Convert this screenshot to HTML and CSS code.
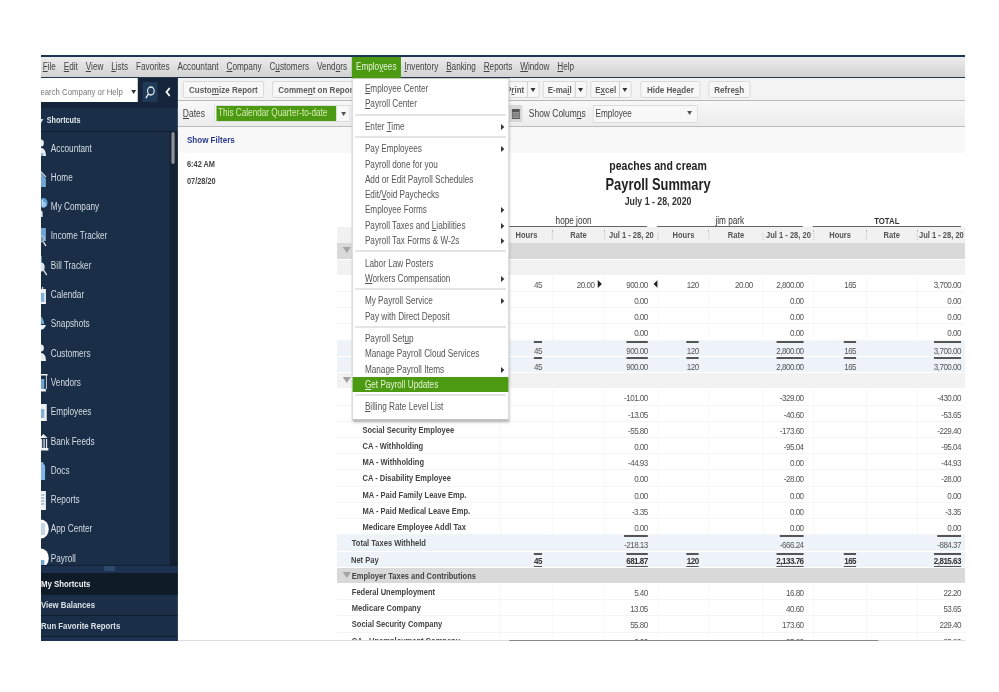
FILE: index.html
```html
<!DOCTYPE html>
<html lang="en">
<head>
    <meta charset="UTF-8">
    <meta name="viewport" content="width=device-width, initial-scale=1.0">
    <title>Payroll Summary</title>
    <link rel="stylesheet" href="styles.css">
</head>
<body>
    <div class="stage">
    <div class="window">
        <nav class="menubar">
            <a><u>F</u>ile</a><a><u>E</u>dit</a><a><u>V</u>iew</a><a><u>L</u>ists</a><a>Favorites</a><a>Accountant</a><a><u>C</u>ompany</a><a>C<u>u</u>stomers</a><a>Vend<u>o</u>rs</a><a class="active">Emplo<u>y</u>ees</a><a><u>I</u>nventory</a><a><u>B</u>anking</a><a><u>R</u>eports</a><a><u>W</u>indow</a><a><u>H</u>elp</a>
        </nav>

        <div class="workspace">
            <aside class="sidebar">
                <div class="search">
                    <div class="search-box"><span class="search-text">Search Company or Help</span><span class="arrow"></span></div>
                    <div class="search-btn">
                        <svg width="14" height="14" viewBox="0 0 14 14"><circle cx="8" cy="6" r="4" fill="none" stroke="#e8eef3" stroke-width="1.4"/><path d="M5 9 2 13" stroke="#e8eef3" stroke-width="1.6"/></svg>
                    </div>
                    <div class="collapse">
                        <svg width="8" height="10" viewBox="0 0 8 10"><path d="M6 1 2 5l4 4" fill="none" stroke="#f2f5f7" stroke-width="2"/></svg>
                    </div>
                </div>
                <div class="side-head"><span class="side-tri"></span>Shortcuts</div>
                <div class="side-list">
                    <div class="side-items">
                        <div class="side-item"><svg viewBox="0 0 12 24"><circle cx="0" cy="7" r="3.500" fill="#e9edf0"/><path d="M-4 20c0-6 1-8 4-8s6 2 6 8z" fill="#e9edf0"/><path d="M-4 20h7v-3h-7z" fill="#8fb6d8"/></svg>Accountant</div>
                        <div class="side-item"><svg viewBox="0 0 12 24"><path d="M-2 5 6 12" stroke="#e9edf0" stroke-width="1.200"/><path d="M-4 12 1 8l5 6v8H-4z" fill="#6fa5d4"/></svg>Home</div>
                        <div class="side-item"><svg viewBox="0 0 12 24"><circle cx="3" cy="8" r="5" fill="#5f9fd8"/><path d="M2 5v6h3V8H2" fill="none" stroke="#fff" stroke-width=".8"/><path d="M-4 22v-6l3-2 3 3v5z" fill="#dfe6ec"/></svg>My Company</div>
                        <div class="side-item"><svg viewBox="0 0 12 24"><path d="M-2 4h8v13h-8z" fill="#6fa5d4"/><circle cx="1" cy="15" r="3" fill="#6f93b5" stroke="#dfe6ec" stroke-width=".8"/><path d="M3 18 6 22" stroke="#dfe6ec" stroke-width="1.500"/></svg>Income Tracker</div>
                        <div class="side-item"><svg viewBox="0 0 12 24"><path d="M-2 3h3v8h-3z" fill="#5f9fd8"/><circle cx="0" cy="14" r="4.500" fill="#dfe6ec"/><path d="M3 17 7 22" stroke="#dfe6ec" stroke-width="1.500"/></svg>Bill Tracker</div>
                        <div class="side-item"><svg viewBox="0 0 12 24"><path d="M-2 6h8v15h-8z" fill="#eef1f4"/><path d="M-2 10h6v9h-6z" fill="#7fb0da"/><path d="M2 4v4" stroke="#eef1f4" stroke-width="1.400"/></svg>Calendar</div>
                        <div class="side-item"><svg viewBox="0 0 12 24"><path d="M-2 4c3 0 5 3 6 8H-2z" fill="#6fa5d4"/><path d="M-2 13h8c-1 3-4 5-8 5z" fill="#eef1f4"/></svg>Snapshots</div>
                        <div class="side-item"><svg viewBox="0 0 12 24"><circle cx="0" cy="7" r="3.500" fill="#e9edf0"/><path d="M-4 20c0-6 1-8 4-8s6 2 6 8z" fill="#e9edf0"/></svg>Customers</div>
                        <div class="side-item"><svg viewBox="0 0 12 24"><path d="M-2 4h10v1.500h-10zM-2 19h8v2.500h-8z" fill="#eef1f4"/><path d="M6 5h1v14H6z" fill="#eef1f4"/><path d="M-2 9h6v10h-6z" fill="#6fa5d4"/></svg>Vendors</div>
                        <div class="side-item"><svg viewBox="0 0 12 24"><path d="M-2 4h9v17h-9z" fill="#eef1f4"/><path d="M-2 9h6v9h-6z" fill="#7fb0da"/></svg>Employees</div>
                        <div class="side-item"><svg viewBox="0 0 12 24"><path d="M-2 9 3 5l5 4zM-2 19h11v2.500H-2z" fill="#eef1f4"/><path d="M0 10h1.500v9H0zM3 10h1.500v9H3zM6 10h1.500v9H6z" fill="#dfe6ec"/></svg>Bank Feeds</div>
                        <div class="side-item"><svg viewBox="0 0 12 24"><path d="M-2 4h4l3 4v14h-7z" fill="#7fb6e6"/></svg>Docs</div>
                        <div class="side-item"><svg viewBox="0 0 12 24"><path d="M-2 3h8v19h-8z" fill="#eef1f4"/><path d="M-2 7h6M-2 10h6M-2 13h6M-2 16h6" stroke="#6f8fae"/></svg>Reports</div>
                        <div class="side-item"><svg viewBox="0 0 12 24"><circle cx="0" cy="12" r="9.500" fill="#fff"/><path d="M-2 6h7v12h-7z" fill="#c3d6e8"/></svg>App Center</div>
                        <div class="side-item"><svg viewBox="0 0 12 24"><circle cx="0" cy="12" r="9.500" fill="#fff"/><path d="M-2 14h6v6h-6z" fill="#6fa5d4"/></svg>Payroll</div>
                    </div>
                    <div class="side-rail"><div class="side-thumb"></div></div>
                </div>
                <div class="splitter"><span></span></div>
                <div class="side-tab current">My Shortcuts</div>
                <div class="side-tab">View Balances</div>
                <div class="side-tab">Run Favorite Reports</div>
                <div class="side-foot"></div>
            </aside>

            <main class="main">
                <div class="toolbar">
                    <span class="btn">Custo<u>m</u>ize Report</span>
                    <span class="btn">Comme<u>n</u>t on Report</span>
                    <span class="btn hidden-btn"></span>
                    <span class="btn hidden-btn"></span>
                    <div class="splits">
                        <span class="btn split">P<u>r</u>int<i class="arr"></i></span>
                        <span class="btn split">E-ma<u>i</u>l<i class="arr"></i></span>
                        <span class="btn split">E<u>x</u>cel<i class="arr"></i></span>
                    </div>
                    <span class="btn">Hide He<u>a</u>der</span>
                    <span class="btn">Refre<u>s</u>h</span>
                </div>

                <div class="filters">
                    <span class="flabel"><u>D</u>ates</span>
                    <div class="select dates"><span class="picked">This Calendar Quarter-to-date</span><span class="arrow"></span></div>
                    <div class="cal">
                        <svg width="10" height="11" viewBox="0 0 10 11"><path d="M0 1h10v10H0z" fill="#555"/><path d="M1 4h8v6H1z" fill="#999"/><path d="M1 6h8M1 8h8" stroke="#555" stroke-width=".6"/></svg>
                    </div>
                    <span class="flabel">Show Colum<u>n</u>s</span>
                    <div class="select columns"><span>Employee</span><span class="arrow"></span></div>
                </div>

                <div class="show-filters"><a>Show Filters</a></div>

                <div class="report">
                    <div class="stamp">
                        <div>6:42 AM</div>
                        <div>07/28/20</div>
                    </div>
                    <div class="sheet">
                        <div class="titles">
                            <div class="company">peaches and cream</div>
                            <div class="title">Payroll Summary</div>
                            <div class="period">July 1 - 28, 2020</div>
                        </div>

                        <div class="groups">
                            <span></span>
                            <div class="group"><span>hope joon</span></div>
                            <div class="group"><span>jim park</span></div>
                            <div class="group last"><span class="strong">TOTAL</span></div>
                        </div>
                        <div class="grid heads">
                            <span></span><b>Hours</b><b>Rate</b><b>Jul 1 - 28, 20</b><b>Hours</b><b>Rate</b><b>Jul 1 - 28, 20</b><b>Hours</b><b>Rate</b><b>Jul 1 - 28, 20</b>
                        </div>

                        <div class="grid band"><span class="lbl head"><i class="tri"></i></span></div>
                        <div class="grid band light"></div>
                        <div class="grid"><span class="lbl"></span><span>45</span><span class="with-mark">20.00<i class="mark right"></i></span><span class="with-mark">900.00<i class="mark left"></i></span><span>120</span><span>20.00</span><span>2,800.00</span><span>165</span><span></span><span>3,700.00</span></div>
                        <div class="grid"><span class="lbl"></span><span></span><span></span><span>0.00</span><span></span><span></span><span>0.00</span><span></span><span></span><span>0.00</span></div>
                        <div class="grid"><span class="lbl"></span><span></span><span></span><span>0.00</span><span></span><span></span><span>0.00</span><span></span><span></span><span>0.00</span></div>
                        <div class="grid"><span class="lbl"></span><span></span><span></span><span>0.00</span><span></span><span></span><span>0.00</span><span></span><span></span><span>0.00</span></div>
                        <div class="grid total"><span class="lbl"></span><span><em class="top">45</em></span><span></span><span><em class="top">900.00</em></span><span><em class="top">120</em></span><span></span><span><em class="top">2,800.00</em></span><span><em class="top">165</em></span><span></span><span><em class="top">3,700.00</em></span></div>
                        <div class="grid total"><span class="lbl"></span><span><em class="top">45</em></span><span></span><span><em class="top">900.00</em></span><span><em class="top">120</em></span><span></span><span><em class="top">2,800.00</em></span><span><em class="top">165</em></span><span></span><span><em class="top">3,700.00</em></span></div>
                        <div class="grid band light"><span class="lbl head"><i class="tri"></i></span></div>
                        <div class="grid"><span class="lbl"></span><span></span><span></span><span>-101.00</span><span></span><span></span><span>-329.00</span><span></span><span></span><span>-430.00</span></div>
                        <div class="grid"><span class="lbl"></span><span></span><span></span><span>-13.05</span><span></span><span></span><span>-40.60</span><span></span><span></span><span>-53.65</span></div>
                        <div class="grid"><span class="lbl l2">Social Security Employee</span><span></span><span></span><span>-55.80</span><span></span><span></span><span>-173.60</span><span></span><span></span><span>-229.40</span></div>
                        <div class="grid"><span class="lbl l2">CA - Withholding</span><span></span><span></span><span>0.00</span><span></span><span></span><span>-95.04</span><span></span><span></span><span>-95.04</span></div>
                        <div class="grid"><span class="lbl l2">MA - Withholding</span><span></span><span></span><span>-44.93</span><span></span><span></span><span>0.00</span><span></span><span></span><span>-44.93</span></div>
                        <div class="grid"><span class="lbl l2">CA - Disability Employee</span><span></span><span></span><span>0.00</span><span></span><span></span><span>-28.00</span><span></span><span></span><span>-28.00</span></div>
                        <div class="grid"><span class="lbl l2">MA - Paid Family Leave Emp.</span><span></span><span></span><span>0.00</span><span></span><span></span><span>0.00</span><span></span><span></span><span>0.00</span></div>
                        <div class="grid"><span class="lbl l2">MA - Paid Medical Leave Emp.</span><span></span><span></span><span>-3.35</span><span></span><span></span><span>0.00</span><span></span><span></span><span>-3.35</span></div>
                        <div class="grid"><span class="lbl l2">Medicare Employee Addl Tax</span><span></span><span></span><span>0.00</span><span></span><span></span><span>0.00</span><span></span><span></span><span>0.00</span></div>
                        <div class="grid total"><span class="lbl l1">Total Taxes Withheld</span><span></span><span></span><span><em class="top">-218.13</em></span><span></span><span></span><span><em class="top">-666.24</em></span><span></span><span></span><span><em class="top">-884.37</em></span></div>
                        <div class="grid total net"><span class="lbl l0">Net Pay</span><span><em class="top under">45</em></span><span></span><span><em class="top under">681.87</em></span><span><em class="top under">120</em></span><span></span><span><em class="top under">2,133.76</em></span><span><em class="top under">165</em></span><span></span><span><em class="top under">2,815.63</em></span></div>
                        <div class="grid band"><span class="lbl head"><i class="tri"></i>Employer Taxes and Contributions</span></div>
                        <div class="grid"><span class="lbl l1">Federal Unemployment</span><span></span><span></span><span>5.40</span><span></span><span></span><span>16.80</span><span></span><span></span><span>22.20</span></div>
                        <div class="grid"><span class="lbl l1">Medicare Company</span><span></span><span></span><span>13.05</span><span></span><span></span><span>40.60</span><span></span><span></span><span>53.65</span></div>
                        <div class="grid"><span class="lbl l1">Social Security Company</span><span></span><span></span><span>55.80</span><span></span><span></span><span>173.60</span><span></span><span></span><span>229.40</span></div>
                        <div class="grid"><span class="lbl l1">CA - Unemployment Company</span><span></span><span></span><span>0.00</span><span></span><span></span><span>95.20</span><span></span><span></span><span>95.20</span></div>
                    </div>
                </div>
                <div class="hscroll"><div class="hthumb"></div></div>
            </main>
        </div>

        <div class="menu">
            <div class="item"><u>E</u>mployee Center</div>
            <div class="item"><u>P</u>ayroll Center</div>
            <div class="sep"></div>
            <div class="item sub">Enter <u>T</u>ime</div>
            <div class="sep"></div>
            <div class="item sub">Pay Employees</div>
            <div class="item">Payroll done for you</div>
            <div class="item">Add or Edit Payroll Schedules</div>
            <div class="item">Edit/<u>V</u>oid Paychecks</div>
            <div class="item sub">Employee Forms</div>
            <div class="item sub">Payroll Taxes and <u>L</u>iabilities</div>
            <div class="item sub">Payroll Tax Forms &amp; W-2s</div>
            <div class="sep"></div>
            <div class="item">Labor Law Posters</div>
            <div class="item sub"><u>W</u>orkers Compensation</div>
            <div class="sep"></div>
            <div class="item sub">My Payroll Service</div>
            <div class="item">Pay with Direct Deposit</div>
            <div class="sep"></div>
            <div class="item">Payroll Set<u>u</u>p</div>
            <div class="item">Manage Payroll Cloud Services</div>
            <div class="item sub">Manage Payroll Items</div>
            <div class="item selected"><u>G</u>et Payroll Updates</div>
            <div class="sep"></div>
            <div class="item"><u>B</u>illing Rate Level List</div>
        </div>
    </div>
    </div>
</body>
</html>
```
FILE: styles.css
```css
/* The whole window is laid out wide, then squeezed to the narrow look of the shot. */
body {
    margin: 0;
    background-color: #fff;
    font-family: 'Liberation Sans', Arial, sans-serif;
    font-size: 10px;
    color: #555;
}

.stage {
    width: 924px;
    height: 586px;
    margin: 55px 0 0 41px;
    overflow: hidden;
}

.window {
    position: relative;
    width: 1127px;
    height: 586px;
    display: flex;
    flex-direction: column;
    overflow: hidden;
    transform: scaleX(.82);
    transform-origin: 0 0;
    filter: blur(.3px);
}

u {
    text-decoration-thickness: 1px;
    text-underline-offset: 1px;
}

/* menu bar */
.menubar {
    display: flex;
    height: 20px;
    flex: none;
    align-items: center;
    padding-left: 0;
    border-top: 2px solid #1c3553;
    border-bottom: 1px solid #24364a;
    background: linear-gradient(#ececec, #d2d2d2);
    color: #444;
}

.menubar a {
    padding: 0 4.800px;
    line-height: 20px;
    white-space: nowrap;
}

.menubar a:first-child {
    padding-left: 2px;
}

.menubar a.active {
    background-color: #4c9a12;
    color: #e6f2d8;
    padding: 0 5px;
    height: 22px;
    margin: 0 0 -2px 1px;
}

.workspace {
    display: flex;
    flex: 1;
    min-height: 0;
}

/* left navigation */
.sidebar {
    width: 167px;
    flex: none;
    display: flex;
    flex-direction: column;
    background-color: #1a2e47;
    color: #d5dde5;
    overflow: hidden;
}

.search {
    height: 30px;
    flex: none;
    display: flex;
    align-items: flex-start;
    background-color: #15243a;
}

.search-box {
    width: 118px;
    height: 24px;
    padding-top: 3px;
    box-sizing: border-box;
    background-color: #fff;
    display: flex;
    align-items: center;
    overflow: hidden;
    font-size: 9.500px;
    color: #777;
}

.search-text {
    flex: 1;
    margin-left: -7px;
    white-space: nowrap;
}

.search-box .arrow {
    margin-right: 2px;
    border-top-color: #333;
}

.search-btn {
    width: 18px;
    height: 20px;
    margin: 4px 0 0 6px;
    background-color: #1f3a57;
    display: flex;
    align-items: center;
    justify-content: center;
}

.collapse {
    margin: 9px 0 0 9px;
}

.side-head {
    height: 24px;
    flex: none;
    line-height: 24px;
    font-weight: bold;
    font-size: 8.800px;
    color: #e3e8ec;
    border-bottom: 1px solid #12202f;
    box-sizing: border-box;
    white-space: nowrap;
}

.side-tri {
    display: inline-block;
    width: 0;
    margin: 0 4px 0 -3px;
    border-left: 3px solid transparent;
    border-right: 3px solid transparent;
    border-top: 4px solid #d5dde5;
}

.side-list {
    flex: 1;
    min-height: 0;
    display: flex;
    overflow: hidden;
}

.side-items {
    flex: 1;
    padding-top: 1.400px;
    overflow: hidden;
}

.side-item {
    height: 29.300px;
    display: flex;
    align-items: center;
    white-space: nowrap;
    font-size: 10px;
}

.side-item svg {
    width: 12px;
    height: 24px;
    flex: none;
    overflow: hidden;
}

.side-rail {
    width: 10px;
    flex: none;
    background-color: #13202f;
}

.side-thumb {
    width: 4px;
    height: 32px;
    margin-left: 2px;
    background-color: #8d9096;
    border-radius: 2px;
}

.splitter {
    height: 8px;
    flex: none;
    display: flex;
    justify-content: center;
    background-color: #1c3250;
    border-top: 1px solid #13202f;
    box-sizing: border-box;
}

.splitter span {
    width: 13px;
    height: 5px;
    background-color: #2d4a6e;
}

.side-tab {
    height: 21px;
    flex: none;
    line-height: 20px;
    font-weight: bold;
    font-size: 9.500px;
    white-space: nowrap;
    box-sizing: border-box;
    border-bottom: 1px solid #101d2c;
    color: #d9e0e6;
}

.side-tab.current {
    height: 22px;
    line-height: 22px;
    background-color: #101b28;
    color: #f2f2f2;
}

.side-foot {
    height: 4px;
    flex: none;
    background-color: #1c3250;
}

/* main column */
.main {
    flex: 1;
    min-width: 0;
    display: flex;
    flex-direction: column;
    background-color: #fff;
}

.toolbar {
    height: 23px;
    flex: none;
    display: flex;
    align-items: flex-start;
    gap: 10px;
    padding: 3px 0 0 6px;
    box-sizing: border-box;
    background-color: #f3f3f3;
    border-bottom: 1px solid #b8b8b8;
}

.btn {
    height: 17px;
    line-height: 16px;
    padding: 0 6.500px;
    box-sizing: border-box;
    border: 1px solid #d6d6d6;
    border-radius: 2px;
    background-color: #f7f7f7;
    font-weight: bold;
    font-size: 9.800px;
    color: #5b5b5b;
    white-space: nowrap;
}

.hidden-btn {
    width: 70px;
}

.splits {
    display: flex;
    gap: 3.500px;
    margin-right: 1px;
}

.split {
    display: flex;
    padding: 0 0 0 5px;
}

.arr {
    width: 13px;
    margin-left: 4px;
    border-left: 1px solid #c4c4c4;
    position: relative;
}

.arr::after {
    content: "";
    position: absolute;
    left: 3px;
    top: 6px;
    border-left: 3.500px solid transparent;
    border-right: 3.500px solid transparent;
    border-top: 4px solid #333;
}

.filters {
    height: 26px;
    flex: none;
    display: flex;
    align-items: flex-start;
    box-sizing: border-box;
    padding: 4px 0 0 6px;
    background: linear-gradient(#f8f8f8, #ececec);
    border-bottom: 1px solid #bcbcbc;
}

.flabel {
    line-height: 18px;
    font-size: 10.300px;
    color: #444;
    white-space: nowrap;
}

.select {
    height: 17px;
    box-sizing: border-box;
    display: flex;
    align-items: center;
    border: 1px solid #dcdcdc;
    background-color: #f8f8f8;
}

.dates {
    width: 166px;
    margin-left: 11px;
    padding-left: 2px;
}

.picked {
    width: 146px;
    height: 15px;
    line-height: 14px;
    padding-left: 2px;
    box-sizing: border-box;
    background-color: #4c9a12;
    color: #d5ecb5;
    white-space: nowrap;
    overflow: hidden;
}

.arrow {
    width: 0;
    height: 0;
    border-left: 3.500px solid transparent;
    border-right: 3.500px solid transparent;
    border-top: 4px solid #555;
}

.dates .arrow {
    margin-left: 6px;
}

.cal {
    width: 16px;
    height: 17px;
    margin: 0 8px 0 194px;
    display: flex;
    align-items: center;
    justify-content: center;
    background-color: #d8d8d8;
}

.columns {
    width: 128px;
    height: 18px;
    margin-left: 9px;
    padding: 0 6px 2px 2px;
    justify-content: space-between;
    color: #444;
}

.show-filters {
    height: 26px;
    flex: none;
    box-sizing: border-box;
    padding-left: 11px;
    line-height: 25px;
    background-color: #f8f8f8;
    font-weight: bold;
    font-size: 9.800px;
    color: #2b3a8c;
}

.report {
    flex: 1;
    min-height: 0;
    display: flex;
    overflow: hidden;
}

.stamp {
    width: 194px;
    flex: none;
    padding: 3px 0 0 11px;
    box-sizing: border-box;
    font-weight: bold;
    font-size: 9px;
    line-height: 17px;
    color: #444;
}

.sheet {
    width: 766px;
    flex: none;
}

.titles {
    padding: 5px 0 0 17px;
    text-align: center;
    font-weight: bold;
    color: #222;
}

.company {
    height: 16px;
    line-height: 16px;
    font-size: 12.800px;
}

.title {
    height: 22px;
    line-height: 22px;
    font-size: 15.700px;
}

.period {
    height: 10px;
    line-height: 10px;
    font-size: 10.700px;
    color: #333;
}

.groups {
    height: 13px;
    margin-top: 8px;
    display: grid;
    grid-template-columns: 199px 191px 190px 186px;
}

.group {
    padding-right: 12px;
    text-align: center;
}

.group.last {
    padding-right: 5px;
}

.group span {
    display: block;
    height: 12px;
    line-height: 13px;
    border-bottom: 1px solid #666;
    font-size: 10px;
    color: #333;
}

.group .strong {
    font-weight: bold;
    font-size: 9.500px;
}

.grid {
    display: grid;
    grid-template-columns: 199px 63px 64px 65px 62px 66px 62px 64px 62px 59px;
    height: 16.230px;
    box-sizing: border-box;
    border-bottom: 1px solid #f5f5f5;
    font-size: 9.800px;
    letter-spacing: -.600px;
    line-height: 17px;
    color: #555;
}

.grid > span {
    display: block;
    padding-right: 12px;
    text-align: right;
    border-left: 1px solid #f5f5f5;
    white-space: nowrap;
    overflow: hidden;
}

.grid > span:last-child {
    padding-right: 5px;
}

.grid > .lbl {
    text-align: left;
    border-left: 0;
    padding: 0;
    font-weight: bold;
    font-size: 9.200px;
    letter-spacing: 0;
    color: #444;
}

.grid > .lbl.l0 {
    padding-left: 17px;
}

.grid > .lbl.l1 {
    padding-left: 18px;
}

.grid > .lbl.l2 {
    padding-left: 31px;
}

.grid > .lbl.head {
    padding-left: 7px;
}

.tri {
    display: inline-block;
    width: 0;
    margin-right: 1px;
    vertical-align: 1px;
    border-left: 5px solid transparent;
    border-right: 5px solid transparent;
    border-top: 6px solid #a3a3a3;
}

.heads {
    height: 16.400px;
    border-bottom: 0;
    background-color: #f1f1f1;
    line-height: 16px;
    letter-spacing: 0;
    font-size: 9.200px;
}

.heads b {
    display: block;
    text-align: center;
    border-left: 1px dotted #bbb;
    margin: 3px 0;
    line-height: 10px;
    white-space: nowrap;
    overflow: hidden;
    color: #555;
}

.band {
    background-color: #d9d9d9;
    border-bottom: 1px solid #fff;
}

.band.light {
    background-color: #f2f2f2;
}

.total {
    background-color: #edf3f8;
    border-bottom: 1px solid #fff;
}

.total > span {
    border-left: 0;
}

.net > span {
    font-weight: bold;
    color: #333;
}

.top {
    display: inline-block;
    height: 15px;
    box-sizing: border-box;
    font-style: normal;
    line-height: 15px;
    border-top: 2px solid #555;
}

.top.under {
    border-bottom: 2px solid #555;
    line-height: 12px;
}

.with-mark {
    position: relative;
}

.mark {
    position: absolute;
    top: 4px;
    border-top: 4.500px solid transparent;
    border-bottom: 4.500px solid transparent;
}

.mark.right {
    right: 3px;
    border-left: 5px solid #222;
}

.mark.left {
    right: 0;
    border-right: 5px solid #222;
}

.hscroll {
    height: 1px;
    flex: none;
    background-color: #ddd;
}

.hthumb {
    width: 450px;
    height: 1px;
    margin-left: 404px;
    background-color: #888;
}

/* Employees dropdown */
.menu {
    position: absolute;
    left: 379px;
    top: 23px;
    width: 192px;
    padding: 2px 0 4px;
    box-sizing: border-box;
    background-color: #fff;
    border: 1px solid #c6c6c6;
    box-shadow: 1px 2px 3px rgba(0, 0, 0, .35);
    color: #555;
}

.item {
    position: relative;
    height: 15.300px;
    line-height: 15.300px;
    padding-left: 15px;
    white-space: nowrap;
}

.item.sub::after {
    content: "";
    position: absolute;
    right: 5px;
    top: 5px;
    border-top: 3px solid transparent;
    border-bottom: 3px solid transparent;
    border-left: 4px solid #333;
}

.item.selected {
    background-color: #4c9a12;
    color: #e6f2d8;
}

.sep {
    height: 7.200px;
    margin: 0 3px;
    background: linear-gradient(#fff 2px, #e4e4e4 2px, #e4e4e4 4px, #fff 4px);
}
```
